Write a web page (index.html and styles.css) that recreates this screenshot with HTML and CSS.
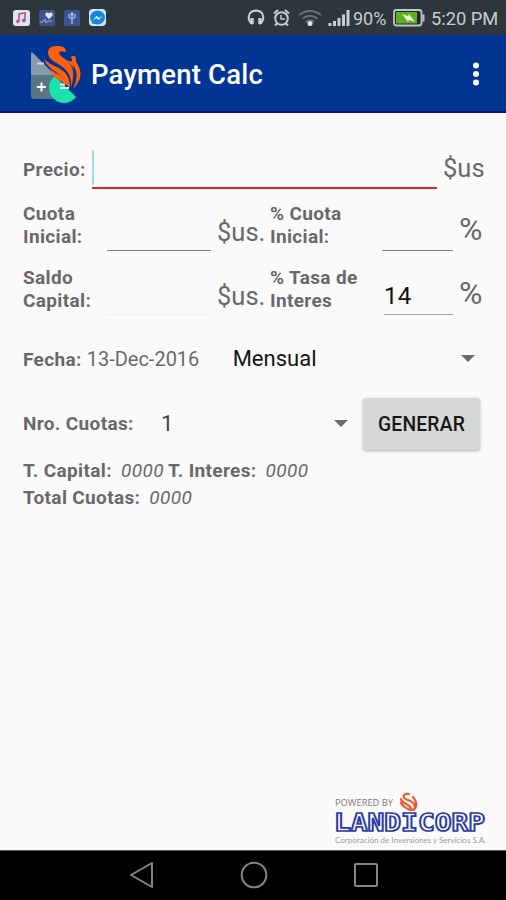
FILE: index.html
```html
<!DOCTYPE html>
<html lang="es">
<head>
<meta charset="utf-8">
<title>Payment Calc</title>
<link rel="stylesheet" href="styles.css">
</head>
<body>
<div class="status">
  <svg class="notifs" width="96" height="18" viewBox="0 0 96 18">
    <rect x="0" y="1" width="17" height="16" rx="3" fill="#e4e2ea"/>
    <path d="M6 12V5l6-1v7" fill="none" stroke="#a8588f" stroke-width="1.6"/><circle cx="4.8" cy="12.4" r="1.8" fill="#d05480"/><circle cx="10.8" cy="11.4" r="1.8" fill="#6366b5"/>
    <rect x="26" y="1" width="16" height="16" rx="2" fill="#3f5388"/>
    <path d="M36 10l-3.500-3.500a2 2 0 0 1 3.500-2a2 2 0 0 1 3.500 2z" fill="#e3e9f1"/><path d="M27 13h3l2-3 1 4 2-2h4" fill="none" stroke="#9fb0cd"/>
    <rect x="51" y="1" width="16" height="16" rx="2" fill="#3d5391"/>
    <path d="M59 15V6M56 5v3l3 2 3-2V5" fill="none" stroke="#9eb0d5" stroke-width="1.500"/><circle cx="59" cy="5" r="1.600" fill="#b7c4df"/>
    <rect x="76" y="0" width="17" height="17" rx="4" fill="#d9e7ee"/><ellipse cx="84.500" cy="8.500" rx="7.500" ry="7" fill="#1688dd"/><path d="M79 15v-4l4 3z" fill="#1688dd"/><path d="M80 11l3.500-4 2.500 2 3.500-2-3.700 4-2.300-2z" fill="#fff"/>
  </svg>
  <svg class="sys" width="105" height="22" viewBox="0 0 105 22">
    <g fill="none" stroke="#c9cdd0" stroke-width="2">
      <path d="M5.500 17C0 14 0 4 9 3.500C18 4 18 14 12.500 17"/>
      <path d="M5 11v6M13 11v6" stroke-width="3.500"/>
      <circle cx="34.500" cy="11.500" r="6.300"/><path d="M34 8v4h4" stroke-width="1.500"/><path d="M27 6.500l4-3.500M42 6.500l-4-3.500M30 16.500l-2 2M39 16.500l2 2"/>
    </g>
    <g fill="none" stroke="#697177" stroke-width="2"><path d="M52 8Q63 0 74 8M55.500 11.500Q63 6 70.500 11.500M59 15Q63 11.500 67 15"/></g><circle cx="63" cy="16.500" r="2.500" fill="#e4e6e7"/>
    <path d="M81.500 16h3v3h-3zM86 14h3v5h-3zM90.500 11h3v8h-3zM95 7.500h3V19h-3zM99.500 3h3v16h-3z" fill="#c9cdd0"/>
  </svg>
  <span class="pct">90%</span>
  <svg class="battery" width="33" height="20" viewBox="0 0 33 20">
    <rect x="1" y="2" width="27.500" height="15.500" rx="2.500" fill="#20292d" stroke="#c2c7c9" stroke-width="1.800"/><rect x="3" y="4" width="21" height="11.500" fill="#60ad20"/><path d="M29.500 6.500h2v7h-2z" fill="#c2c7c9"/><path d="M9 6l6 2 1-2 6 8-6-2-1 2z" fill="#e4f2d8"/>
  </svg>
  <span class="clock">5:20 PM</span>
</div>
<header class="bar">
  <svg class="logo" width="52" height="60" viewBox="0 0 52 60">
    <path d="M1 9q0-3 2-1l22 22H1z" fill="#8799aa"/><path d="M1 30h24l1 24H4q-3 0-3-3z" fill="#587582"/>
    <path d="M7 18.500h7" stroke="#c9d3df" stroke-width="2"/><path d="M7 42h9M11.500 37.500v9" stroke="#fff" stroke-width="1.900"/>
    <path d="M25 31A15 15 0 1 0 46 52z" fill="#19e2ad"/><path d="M30 39.500h5M30 43h9" stroke="#eafff8" stroke-width="1.800"/>
    <g fill="#ff600e">
      <path d="M36 7Q29 5 29 8Q30 11 35 14Q44 20 43 31Q43 37 41 42Q42 31 36 25Q32 21 25 17Q18 13 18 8Q18 1 26 1Q36 0 36 7z"/>
      <path d="M14 14Q19 19 27 22Q40 28 40 42Q35 32 26 27Q17 22 14 14z"/>
      <path d="M20 24Q25 28 30 30Q38 34 40 43Q35 38 29 35Q22 31 20 24z"/>
      <path d="M41 12Q43 10 46 12Q45 16 48 20Q55 32 43 44Q48 33 46 26Q45 23 43 20Q45 32 42 41Q46 27 42 21L37 15Q43 18 42 15z"/>
    </g>
  </svg>
  <h1>Payment Calc</h1>
  <svg class="more" width="8" height="24" viewBox="0 0 8 24" fill="#fff"><circle cx="4" cy="3.500" r="3"/><circle cx="4" cy="12" r="3"/><circle cx="4" cy="20.500" r="3"/></svg>
</header>
<main>
  <div class="row price"><b class="lbl">Precio:</b><div class="field focus"><i class="caret"></i></div><span class="unit">$us</span></div>
  <div class="row pair"><b class="lbl">Cuota<br>Inicial:</b><div class="field"></div><span class="unit">$us.</span><b class="lbl">% Cuota<br>Inicial:</b><div class="field"></div><span class="unit pc">%</span></div>
  <div class="row pair"><b class="lbl">Saldo<br>Capital:</b><div class="field off"></div><span class="unit">$us.</span><b class="lbl">% Tasa de<br>Interes</b><div class="field rate">14</div><span class="unit pc">%</span></div>
  <div class="row date"><b class="lbl">Fecha:</b><span class="day">13-Dec-2016</span><div class="spinner"><span>Mensual</span><i class="arrow"></i></div></div>
  <div class="row count"><b class="lbl">Nro. Cuotas:</b><div class="spinner"><span>1</span><i class="arrow"></i></div><button>GENERAR</button></div>
  <div class="totals">
    <div><b class="lbl">T. Capital:</b><em>0000</em><b class="lbl second">T. Interes:</b><em>0000</em></div>
    <div><b class="lbl">Total Cuotas:</b><em>0000</em></div>
  </div>
  <svg class="brand" width="156" height="54" viewBox="0 0 156 54">
    <text x="3" y="14" class="pow" textLength="58" lengthAdjust="spacingAndGlyphs">POWERED BY</text>
    <g fill="none" stroke="#ed5931" stroke-width="2.200" stroke-linecap="round"><path d="M77 2C69 1 71 7 76 8Q85 11 82 18M69 7C69 12 77 10 80 18M69 11Q71 15 78 18M81 5Q87 12 82 18"/></g>
    <text x="2" y="39" class="name" textLength="151" lengthAdjust="spacingAndGlyphs">LANDICORP</text>
    <text x="3" y="51" class="tag" textLength="151" lengthAdjust="spacingAndGlyphs">Corporación de Inversiones y Servicios S.A.</text>
  </svg>
</main>
<nav>
  <svg width="26" height="28" viewBox="0 0 26 28"><path d="M2 14L23 2v24z"/></svg>
  <svg width="28" height="28" viewBox="0 0 28 28"><circle cx="14" cy="14" r="12.300"/></svg>
  <svg width="26" height="26" viewBox="0 0 26 26"><rect x="2" y="2" width="22" height="22" rx="1"/></svg>
</nav>
</body>
</html>
```

FILE: styles.css
```css
* { box-sizing: border-box; }
body { margin: 0; width: 506px; height: 900px; display: flex; flex-direction: column; background: #fafafa; font-family: Roboto, sans-serif; color: #696969; overflow: hidden; }
.status { height: 35px; flex: none; background: #2c363c; display: flex; align-items: center; color: #c9cdd0; font-size: 18px; line-height: 35px; white-space: nowrap; }
.notifs { margin-left: 13px; }
.sys { margin-left: 138px; }
.pct { width: 40px; margin-left: 1px; font-size: 18px; padding-top: 1px; }
.battery { flex: none; }
.clock { margin-left: 5px; font-size: 18.3px; padding-top: 1px; }
.bar { height: 78px; flex: none; background: #003594; border-bottom: 2px solid #10107c; display: flex; align-items: center; }
.logo { margin: 3px 0 0 30px; }
h1 { margin: 4px 0 0 9px; font-size: 27.5px; font-weight: 500; letter-spacing: .2px; line-height: 36px; color: #fff; flex: 1; white-space: nowrap; }
.more { margin: 1px 26px 0 0; }
main { flex: 1; padding: 27px 0 0 23px; display: flex; flex-direction: column; }
.row { display: flex; flex: none; height: 64px; white-space: nowrap; }
.lbl { font-weight: 700; font-size: 19px; line-height: 23px; letter-spacing: .35px; }
.field { height: 53px; border-bottom: 1.5px solid #858585; color: #111; font-size: 24px; line-height: 69px; letter-spacing: .3px; }
.unit { font-size: 25.5px; line-height: 32px; }
.price { height: 58px; }
.price .lbl { width: 69px; padding-top: 18px; }
.price .field { width: 345px; height: 49px; border-bottom: 2px solid #e12626; }
.caret { display: block; width: 2px; height: 35px; margin-top: 10px; background: #a6dadd; }
.price .unit { padding: 12px 0 0 6px; }
.pair { display: grid; grid-template-columns: 84px 104px 59px 112px 71px 1fr; align-items: start; }
.pair .lbl { padding-top: 4px; }
.pair .unit { padding: 18px 0 0 6px; }
.pair .pc { font-size: 32px; padding-top: 15px; }
.field.off { border-color: #f1f1f1; }
.rate { margin-left: 2px; border-color: #a3a3a3; }
.date { height: 66px; align-items: center; }
.day { margin-left: 5px; width: 146px; font-size: 20px; }
.spinner { display: flex; align-items: center; justify-content: space-between; color: #151515; font-size: 22px; }
.date .spinner { width: 242px; }
.date .spinner, .count .spinner { margin-top: -1px; }
.arrow { border: 7px solid transparent; border-top: 7px solid #6b6b6b; border-bottom: 0; }
.count { align-items: center; }
.count .lbl { width: 138px; margin-top: -1px; }
.count .spinner { width: 187px; color: #444; }
button { margin-left: 15px; width: 117px; height: 52px; border: 0; border-radius: 3px; background: #d6d8d7; box-shadow: 0 1px 3px rgba(0,0,0,.3); font: 500 19.3px Roboto, sans-serif; letter-spacing: .2px; color: #161616; padding: 0; }
.totals { padding-top: 1px; line-height: 27px; white-space: nowrap; }
.totals > div { height: 27px; }
.totals em { font-size: 19px; margin-left: 9px; letter-spacing: .4px; }
.totals .second { margin-left: 4px; }
.brand { margin: auto 18px 4px 0; align-self: flex-end; }
.pow { font: 8.5px "Open Sans", sans-serif; fill: #777; }
.name { font: 700 24px "DejaVu Sans Mono", monospace; fill: #fafafa; stroke: #2b3ba2; stroke-width: 1.7px; }
.tag { font: 8px Lato, sans-serif; fill: #9a9a9a; }
nav { height: 50px; flex: none; background: #000; border-top: 1px solid #555; display: grid; grid-template-columns: 112px 112px 112px; justify-content: center; justify-items: center; align-items: center; padding: 0 0 1px 2px; }
nav svg { fill: none; stroke: #858585; stroke-width: 2; stroke-linejoin: round; }
```
